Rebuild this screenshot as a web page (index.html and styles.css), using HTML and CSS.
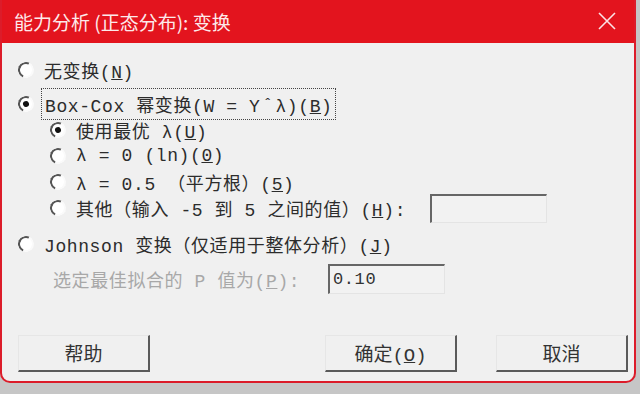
FILE: index.html
```html
<!DOCTYPE html>
<html lang="zh">
<head>
<meta charset="utf-8">
<title>能力分析 (正态分布): 变换</title>
<link rel="stylesheet" href="styles.css">
</head>
<body>
<div class="dialog">
  <div class="titlebar">
    <span class="title">能力分析 (正态分布): 变换</span>
    <svg class="close" width="20" height="20" viewBox="0 0 20 20"><path d="M2 2 L18 18 M18 2 L2 18" stroke="#fbe3e5" stroke-width="1.6" fill="none"/></svg>
  </div>
  <div class="content">
    <div class="row r1"><span class="radio"></span><span class="label">无变换(<u>N</u>)</span></div>
    <div class="row r2"><span class="radio on"></span><span class="label focus">Box-Cox 幂变换(W = Y<span class="caret">ˆ</span>λ)(<u>B</u>)</span></div>
    <div class="sub">
      <div class="row"><span class="radio on"></span><span class="label">使用最优 λ(<u>U</u>)</span></div>
      <div class="row"><span class="radio"></span><span class="label">λ = 0 (ln)(<u>0</u>)</span></div>
      <div class="row"><span class="radio"></span><span class="label">λ = 0.5 （平方根）(<u>5</u>)</span></div>
      <div class="row"><span class="radio"></span><span class="label l-other">其他（输入 -5 到 5 之间的值）(<u>H</u>):</span><span class="field f-other"></span></div>
    </div>
    <div class="row r3"><span class="radio"></span><span class="label">Johnson 变换（仅适用于整体分析）(<u>J</u>)</span></div>
    <div class="row r4"><span class="label dim l-p">选定最佳拟合的 P 值为(<u>P</u>):</span><span class="field f-p">0.10</span></div>
    <div class="buttons">
      <button class="btn">帮助</button>
      <span class="spacer"></span>
      <button class="btn">确定(<u>O</u>)</button>
      <button class="btn cancel">取消</button>
    </div>
  </div>
</div>
</body>
</html>
```
FILE: styles.css
```css
html, body {
  margin: 0;
  padding: 0;
  background: #c6c6c6;
  width: 640px;
  height: 394px;
  overflow: hidden;
}
.dialog {
  width: 632px;
  height: 381px;
  background: #f0f0f0;
  border: 2px solid #dc1c2a;
  border-top: none;
  border-radius: 0 0 10px 10px;
  display: flex;
  flex-direction: column;
  overflow: hidden;
}
.titlebar {
  height: 43px;
  background: #e3141e;
  display: flex;
  align-items: center;
  padding: 0 0 0 12px;
  flex: none;
}
.title {
  font-family: "Noto Sans CJK SC", "Noto Sans", sans-serif;
  font-size: 19px;
  color: #fde9ea;
  flex: 1;
  margin-top: -1px;
}
.close {
  margin-right: 17px;
  margin-top: -2px;
}
.content {
  display: flex;
  flex-direction: column;
  padding: 14px 0 0 16px;
  font-family: "Liberation Mono", "Noto Sans CJK SC", monospace;
  font-size: 18px;
  letter-spacing: 0.6px;
  color: #2c2c2c;
}
.row {
  height: 26px;
  display: flex;
  align-items: center;
}
.r2 { margin-top: 8px; }
.sub { padding-left: 32px; display: flex; flex-direction: column; }
.r3 { margin-top: 10px; }
.r4 { margin-top: 7px; height: 30px; padding-left: 35px; }
.radio {
  width: 12px;
  height: 12px;
  border-radius: 50%;
  background: #fff;
  border: 2px solid;
  border-color: #555 #fafafa #fafafa #555;
  transform: rotate(-20deg);
  flex: none;
  margin-right: 10px;
  position: relative;
}
.radio.on::after {
  content: "";
  position: absolute;
  left: 3px;
  top: 3px;
  width: 6px;
  height: 6px;
  border-radius: 50%;
  background: #111;
}
.label { white-space: pre; }
.focus {
  outline: 1px dotted #444;
  outline-offset: 2px;
  padding: 0 1px;
}
.caret { font-size: 14px; position: relative; top: -3px; margin: 0 3px; }
.l-other { width: 346px; }
.l-p { width: 266px; }
.dim { color: #a8a8a8; }
.field {
  box-sizing: border-box;
  height: 29px;
  border-style: solid;
  border-width: 2px 1px 1px 2px;
  border-color: #666 #e4e4e4 #e4e4e4 #666;
  background: #f2f2f2;
  flex: none;
}
.f-other { width: 117px; margin-left: 8px; }
.f-p {
  width: 117px;
  height: 30px;
  margin-left: 9px;
  padding: 2px 0 0 3px;
  font-size: 17px;
  color: #333;
  line-height: 24px;
}
.buttons {
  display: flex;
  margin-top: 41px;
  padding-right: 6px;
}
.spacer { flex: 1; }
.btn {
  width: 132px;
  height: 37px;
  box-sizing: border-box;
  background: #f0f0f0;
  border-style: solid;
  border-width: 1px 2px 2px 1px;
  border-color: #e6e6e6 #5a5a5a #5a5a5a #e6e6e6;
  font-family: "Liberation Mono", "Noto Sans CJK SC", monospace;
  font-size: 19px;
  color: #333;
  padding: 0;
}
.cancel { margin-left: 39px; }
```
